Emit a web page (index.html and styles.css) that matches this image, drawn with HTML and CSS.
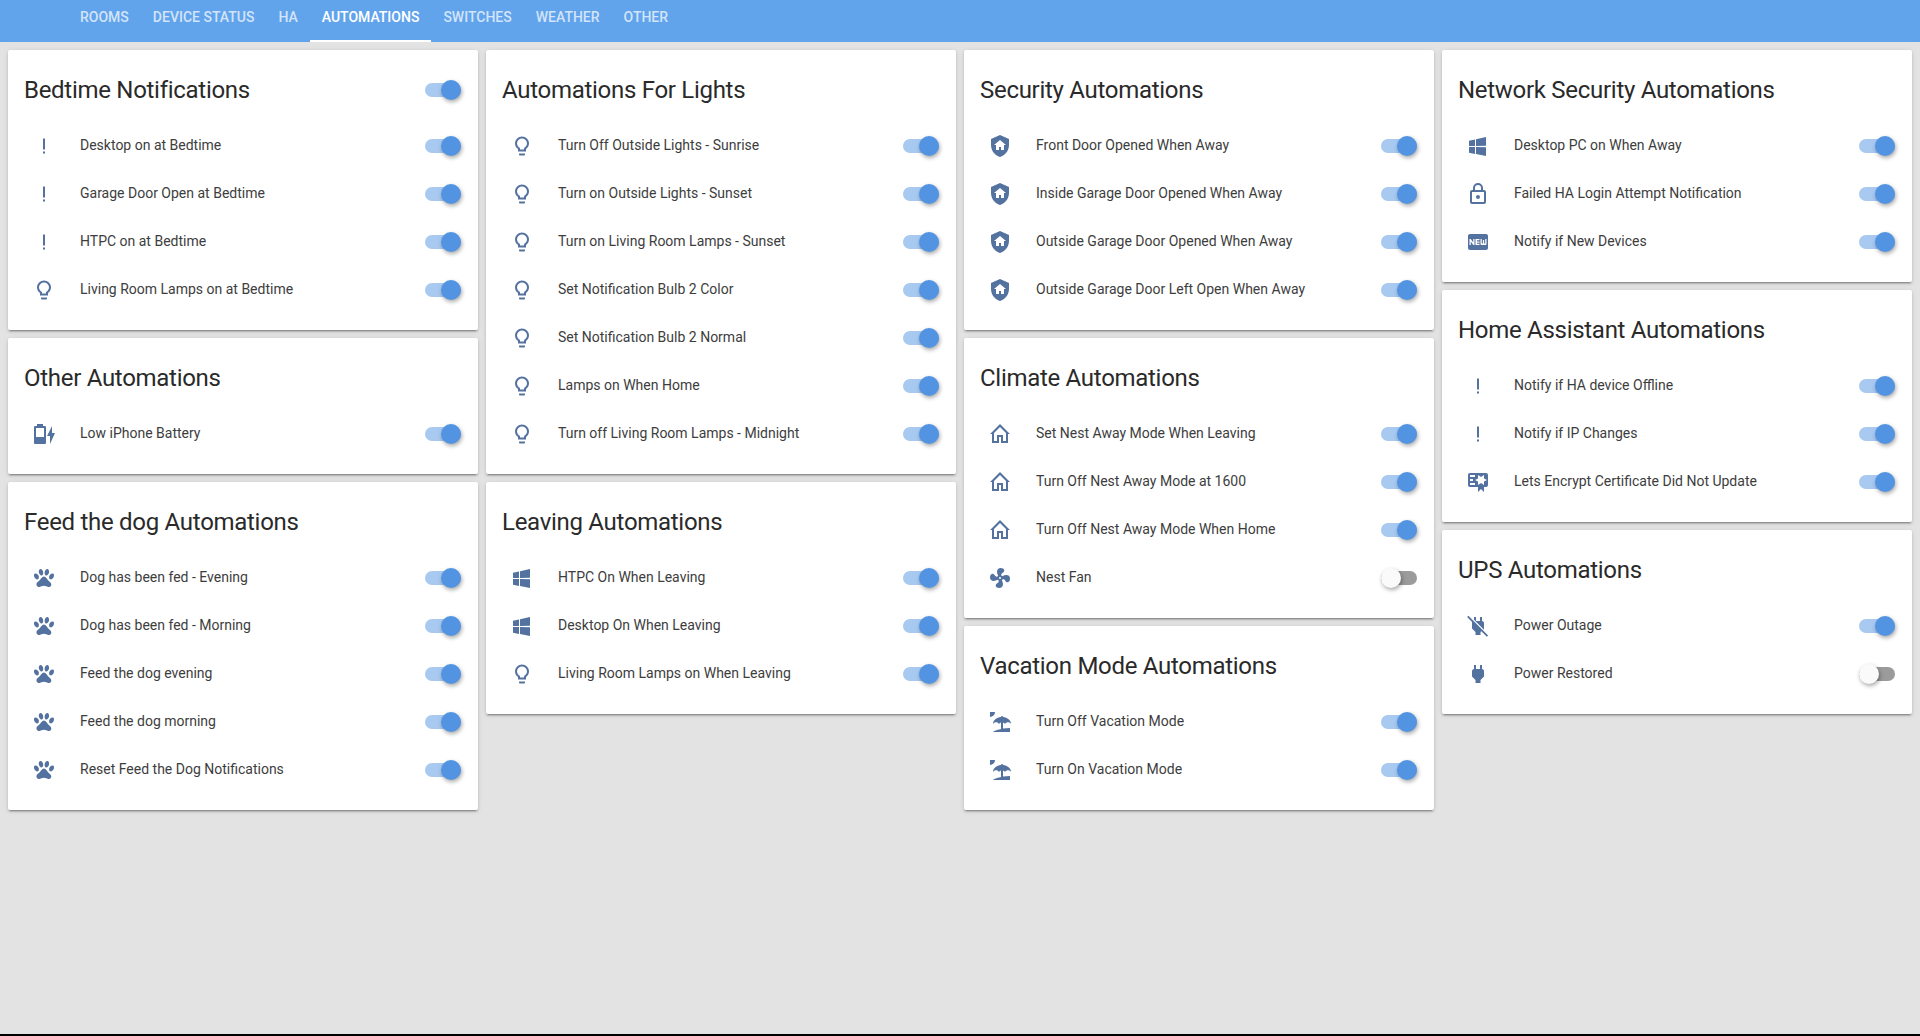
FILE: index.html
```html
<!DOCTYPE html>
<html lang="en">
<head>
    <meta charset="UTF-8">
    <title>Automations</title>
    <link rel="stylesheet" href="styles.css">
</head>
<body>
    <svg class="sprite" xmlns="http://www.w3.org/2000/svg">
        <symbol id="i-alert" viewBox="0 0 24 24"><path d="M11,4.5H13V15.5H11V4.5M13,17.5V19.5H11V17.5H13Z"/></symbol>
        <symbol id="i-bulb" viewBox="0 0 24 24"><path fill-rule="evenodd" d="M12,2.5A7,7 0 0,1 19,9.5C19,12 17.6,13.7 16,15V17.5H8V15C6.4,13.7 5,12 5,9.5A7,7 0 0,1 12,2.5ZM12,4.5A5,5 0 0,0 7,9.5C7,11.4 8.3,13 10,14V15.5H14V14C15.7,13 17,11.4 17,9.5A5,5 0 0,0 12,4.5ZM9,19.5H15V20.5A1,1 0 0,1 14,21.5H10A1,1 0 0,1 9,20.5Z"/></symbol>
        <symbol id="i-battery" viewBox="0 0 24 24"><path fill-rule="evenodd" d="M23,11H20V4L15,14H18V22ZM12.67,4H11V2H5V4H3.33A1.33,1.33 0 0,0 2,5.33V20.67C2,21.4 2.6,22 3.33,22H12.67C13.4,22 14,21.4 14,20.67V5.33A1.33,1.33 0 0,0 12.67,4ZM12,6V15H4V6Z"/></symbol>
        <symbol id="i-paw" viewBox="0 0 24 24"><path d="M8.35,3C9.53,2.83 10.78,4.12 11.14,5.9C11.5,7.67 10.85,9.25 9.67,9.43C8.5,9.61 7.24,8.32 6.87,6.54C6.5,4.77 7.17,3.19 8.35,3M15.5,3C16.69,3.19 17.35,4.77 17,6.54C16.62,8.32 15.37,9.61 14.19,9.43C13,9.25 12.35,7.67 12.72,5.9C13.08,4.12 14.33,2.83 15.5,3M3,7.6C4.14,7.11 5.69,8 6.5,9.55C7.26,11.13 7,12.79 5.87,13.28C4.74,13.77 3.2,12.89 2.41,11.32C1.62,9.75 1.9,8.08 3,7.6M21,7.6C22.1,8.08 22.38,9.75 21.59,11.32C20.8,12.89 19.26,13.77 18.13,13.28C17,12.79 16.74,11.13 17.5,9.55C18.31,8 19.86,7.11 21,7.6M19.33,18.38C19.37,19.32 18.65,20.36 17.79,20.75C16,21.57 13.88,19.87 11.89,19.87C9.9,19.87 7.76,21.64 6,20.75C5,20.26 4.31,18.96 4.44,17.88C4.62,16.39 6.41,15.59 7.47,14.5C8.88,13.09 9.88,10.44 11.89,10.44C13.89,10.44 14.95,13.05 16.3,14.5C17.41,15.72 19.26,16.75 19.33,18.38Z"/></symbol>
        <symbol id="i-shield" viewBox="0 0 24 24"><path fill-rule="evenodd" d="M11,13H13V16H16V11H18L12,6L6,11H8V16H11V13ZM12,1L3,5V11C3,16.55 6.84,21.74 12,23C17.16,21.74 21,16.55 21,11V5L12,1Z"/></symbol>
        <symbol id="i-home" viewBox="0 0 24 24"><path fill-rule="evenodd" d="M9,19V13H15V19H18V10.91L12,4.91L6,10.91V19H9ZM12,2.09L21.91,12H20V21H13V15H11V21H4V12H2.09L12,2.09Z"/></symbol>
        <symbol id="i-fan" viewBox="0 0 24 24"><path d="M12,11A1,1 0 0,0 11,12A1,1 0 0,0 12,13A1,1 0 0,0 13,12A1,1 0 0,0 12,11M12.5,2C17,2 17.11,5.57 14.75,6.75C13.76,7.24 13.32,8.29 13.13,9.22C13.61,9.42 14.03,9.73 14.35,10.13C18.05,8.13 22.03,8.92 22.03,12.5C22.03,17 18.46,17.1 17.28,14.73C16.78,13.74 15.72,13.3 14.79,13.11C14.59,13.59 14.28,14 13.88,14.34C15.87,18.03 15.08,22 11.5,22C7,22 6.91,18.42 9.27,17.24C10.25,16.75 10.69,15.71 10.89,14.79C10.4,14.59 9.97,14.27 9.65,13.87C5.96,15.85 2,15.07 2,11.5C2,7 5.56,6.89 6.74,9.26C7.24,10.25 8.29,10.68 9.22,10.87C9.41,10.39 9.73,9.97 10.14,9.65C8.15,5.96 8.94,2 12.5,2Z"/></symbol>
        <symbol id="i-beach" viewBox="0 0 24 24"><path d="M15,18.54C17.13,18.21 19.5,18 22,18V22H5C5,21.35 8.2,19.86 13,18.9V12.4C12.16,12.65 11.45,13.21 11,13.95C10.39,12.93 9.27,12.25 8,12.25C6.73,12.25 5.61,12.93 5,13.95C5.03,10.37 8.5,7.43 13,7.04V7A1,1 0 0,1 14,6A1,1 0 0,1 15,7V7.04C19.5,7.43 22.96,10.37 23,13.95C22.39,12.93 21.27,12.25 20,12.25C18.73,12.25 17.61,12.93 17,13.95C16.55,13.21 15.84,12.65 15,12.39V18.54M7,2A5,5 0 0,1 2,7V2H7Z"/></symbol>
        <symbol id="i-windows" viewBox="0 0 24 24"><path d="M3,12V6.75L9,5.43V11.91L3,12M20,3V11.75L10,11.9V5.21L20,3M3,13L9,13.09V19.9L3,18.75V13M20,13.25V22L10,20.09V13.1L20,13.25Z"/></symbol>
        <symbol id="i-lock" viewBox="0 0 24 24"><path fill-rule="evenodd" d="M12,17C10.89,17 10,16.1 10,15C10,13.89 10.89,13 12,13A2,2 0 0,1 14,15A2,2 0 0,1 12,17ZM18,20V10H6V20H18ZM18,8A2,2 0 0,1 20,10V20A2,2 0 0,1 18,22H6C4.89,22 4,21.1 4,20V10C4,8.89 4.89,8 6,8H7V6A5,5 0 0,1 12,1A5,5 0 0,1 17,6V8H18ZM12,3A3,3 0 0,0 9,6V8H15V6A3,3 0 0,0 12,3Z"/></symbol>
        <symbol id="i-new" viewBox="0 0 24 24"><path fill-rule="evenodd" d="M20,4C21.11,4 22,4.89 22,6V18C22,19.11 21.11,20 20,20H4C2.89,20 2,19.11 2,18V6C2,4.89 2.89,4 4,4H20ZM8.5,15V9H7.25V12.5L4.75,9H3.5V15H4.75V11.5L7.3,15H8.5ZM13.5,10.26V9H9.5V15H13.5V13.75H11V12.64H13.5V11.38H11V10.26H13.5ZM20.5,14V9H19.25V13.5H18.13V10H16.88V13.5H15.75V9H14.5V14A1,1 0 0,0 15.5,15H19.5A1,1 0 0,0 20.5,14Z"/></symbol>
        <symbol id="i-cert" viewBox="0 0 24 24"><path fill-rule="evenodd" d="M4,3C2.89,3 2,3.89 2,5V15A2,2 0 0,0 4,17H12V22L15,19L18,22V17H20A2,2 0 0,0 22,15V5A2,2 0 0,0 20,3H4ZM12,5L15,7L18,5V8.5L21,10L18,11.5V15L15,13L12,15V11.5L9,10L12,8.5V5ZM4,5H9V7H4V5ZM4,9H7V11H4V9ZM4,13H9V15H4V13Z"/></symbol>
        <symbol id="i-plug-off" viewBox="0 0 24 24"><path d="M22.11,21.46L2.39,1.73L1.11,3L6,7.89V14.5L9.5,18V21H14.5V18L15.31,17.2L20.84,22.73L22.11,21.46M16,7V3H14V7H10V3H8V5.8L18,15.8V9C18,8 17,7 16,7Z"/></symbol>
        <symbol id="i-plug" viewBox="0 0 24 24"><path d="M16,7V3H14V7H10V3H8V7C7,7 6,8 6,9V14.5L9.5,18V21H14.5V18L18,14.5V9C18,8 17,7 16,7Z"/></symbol>
    </svg>

    <header class="topbar">
        <nav class="tabs">
            <a class="tab" href="#">Rooms</a>
            <a class="tab" href="#">Device Status</a>
            <a class="tab" href="#">HA</a>
            <a class="tab active" href="#">Automations</a>
            <a class="tab" href="#">Switches</a>
            <a class="tab" href="#">Weather</a>
            <a class="tab" href="#">Other</a>
        </nav>
    </header>

    <main class="columns">
        <div class="column">
            <section class="card">
                <div class="card-header">
                    <h2>Bedtime Notifications</h2>
                    <span class="toggle on"></span>
                </div>
                <div class="row"><svg class="icon"><use href="#i-alert"/></svg><span class="name">Desktop on at Bedtime</span><span class="toggle on"></span></div>
                <div class="row"><svg class="icon"><use href="#i-alert"/></svg><span class="name">Garage Door Open at Bedtime</span><span class="toggle on"></span></div>
                <div class="row"><svg class="icon"><use href="#i-alert"/></svg><span class="name">HTPC on at Bedtime</span><span class="toggle on"></span></div>
                <div class="row"><svg class="icon"><use href="#i-bulb"/></svg><span class="name">Living Room Lamps on at Bedtime</span><span class="toggle on"></span></div>
            </section>
            <section class="card">
                <div class="card-header"><h2>Other Automations</h2></div>
                <div class="row"><svg class="icon"><use href="#i-battery"/></svg><span class="name">Low iPhone Battery</span><span class="toggle on"></span></div>
            </section>
            <section class="card">
                <div class="card-header"><h2>Feed the dog Automations</h2></div>
                <div class="row"><svg class="icon"><use href="#i-paw"/></svg><span class="name">Dog has been fed - Evening</span><span class="toggle on"></span></div>
                <div class="row"><svg class="icon"><use href="#i-paw"/></svg><span class="name">Dog has been fed - Morning</span><span class="toggle on"></span></div>
                <div class="row"><svg class="icon"><use href="#i-paw"/></svg><span class="name">Feed the dog evening</span><span class="toggle on"></span></div>
                <div class="row"><svg class="icon"><use href="#i-paw"/></svg><span class="name">Feed the dog morning</span><span class="toggle on"></span></div>
                <div class="row"><svg class="icon"><use href="#i-paw"/></svg><span class="name">Reset Feed the Dog Notifications</span><span class="toggle on"></span></div>
            </section>
        </div>

        <div class="column">
            <section class="card">
                <div class="card-header"><h2>Automations For Lights</h2></div>
                <div class="row"><svg class="icon"><use href="#i-bulb"/></svg><span class="name">Turn Off Outside Lights - Sunrise</span><span class="toggle on"></span></div>
                <div class="row"><svg class="icon"><use href="#i-bulb"/></svg><span class="name">Turn on Outside Lights - Sunset</span><span class="toggle on"></span></div>
                <div class="row"><svg class="icon"><use href="#i-bulb"/></svg><span class="name">Turn on Living Room Lamps - Sunset</span><span class="toggle on"></span></div>
                <div class="row"><svg class="icon"><use href="#i-bulb"/></svg><span class="name">Set Notification Bulb 2 Color</span><span class="toggle on"></span></div>
                <div class="row"><svg class="icon"><use href="#i-bulb"/></svg><span class="name">Set Notification Bulb 2 Normal</span><span class="toggle on"></span></div>
                <div class="row"><svg class="icon"><use href="#i-bulb"/></svg><span class="name">Lamps on When Home</span><span class="toggle on"></span></div>
                <div class="row"><svg class="icon"><use href="#i-bulb"/></svg><span class="name">Turn off Living Room Lamps - Midnight</span><span class="toggle on"></span></div>
            </section>
            <section class="card">
                <div class="card-header"><h2>Leaving Automations</h2></div>
                <div class="row"><svg class="icon"><use href="#i-windows"/></svg><span class="name">HTPC On When Leaving</span><span class="toggle on"></span></div>
                <div class="row"><svg class="icon"><use href="#i-windows"/></svg><span class="name">Desktop On When Leaving</span><span class="toggle on"></span></div>
                <div class="row"><svg class="icon"><use href="#i-bulb"/></svg><span class="name">Living Room Lamps on When Leaving</span><span class="toggle on"></span></div>
            </section>
        </div>

        <div class="column">
            <section class="card">
                <div class="card-header"><h2>Security Automations</h2></div>
                <div class="row"><svg class="icon"><use href="#i-shield"/></svg><span class="name">Front Door Opened When Away</span><span class="toggle on"></span></div>
                <div class="row"><svg class="icon"><use href="#i-shield"/></svg><span class="name">Inside Garage Door Opened When Away</span><span class="toggle on"></span></div>
                <div class="row"><svg class="icon"><use href="#i-shield"/></svg><span class="name">Outside Garage Door Opened When Away</span><span class="toggle on"></span></div>
                <div class="row"><svg class="icon"><use href="#i-shield"/></svg><span class="name">Outside Garage Door Left Open When Away</span><span class="toggle on"></span></div>
            </section>
            <section class="card">
                <div class="card-header"><h2>Climate Automations</h2></div>
                <div class="row"><svg class="icon"><use href="#i-home"/></svg><span class="name">Set Nest Away Mode When Leaving</span><span class="toggle on"></span></div>
                <div class="row"><svg class="icon"><use href="#i-home"/></svg><span class="name">Turn Off Nest Away Mode at 1600</span><span class="toggle on"></span></div>
                <div class="row"><svg class="icon"><use href="#i-home"/></svg><span class="name">Turn Off Nest Away Mode When Home</span><span class="toggle on"></span></div>
                <div class="row"><svg class="icon"><use href="#i-fan"/></svg><span class="name">Nest Fan</span><span class="toggle"></span></div>
            </section>
            <section class="card">
                <div class="card-header"><h2>Vacation Mode Automations</h2></div>
                <div class="row"><svg class="icon"><use href="#i-beach"/></svg><span class="name">Turn Off Vacation Mode</span><span class="toggle on"></span></div>
                <div class="row"><svg class="icon"><use href="#i-beach"/></svg><span class="name">Turn On Vacation Mode</span><span class="toggle on"></span></div>
            </section>
        </div>

        <div class="column">
            <section class="card">
                <div class="card-header"><h2>Network Security Automations</h2></div>
                <div class="row"><svg class="icon"><use href="#i-windows"/></svg><span class="name">Desktop PC on When Away</span><span class="toggle on"></span></div>
                <div class="row"><svg class="icon"><use href="#i-lock"/></svg><span class="name">Failed HA Login Attempt Notification</span><span class="toggle on"></span></div>
                <div class="row"><svg class="icon"><use href="#i-new"/></svg><span class="name">Notify if New Devices</span><span class="toggle on"></span></div>
            </section>
            <section class="card">
                <div class="card-header"><h2>Home Assistant Automations</h2></div>
                <div class="row"><svg class="icon"><use href="#i-alert"/></svg><span class="name">Notify if HA device Offline</span><span class="toggle on"></span></div>
                <div class="row"><svg class="icon"><use href="#i-alert"/></svg><span class="name">Notify if IP Changes</span><span class="toggle on"></span></div>
                <div class="row"><svg class="icon"><use href="#i-cert"/></svg><span class="name">Lets Encrypt Certificate Did Not Update</span><span class="toggle on"></span></div>
            </section>
            <section class="card">
                <div class="card-header"><h2>UPS Automations</h2></div>
                <div class="row"><svg class="icon"><use href="#i-plug-off"/></svg><span class="name">Power Outage</span><span class="toggle on"></span></div>
                <div class="row"><svg class="icon"><use href="#i-plug"/></svg><span class="name">Power Restored</span><span class="toggle"></span></div>
            </section>
        </div>
    </main>

    <div class="screen-edge"></div>
</body>
</html>
```

FILE: styles.css
```css
* {
    box-sizing: border-box;
}

body {
    margin: 0;
    height: 100vh;
    display: flex;
    flex-direction: column;
    overflow: hidden;
    background-color: #e3e3e3;
    font-family: Roboto, "Liberation Sans", sans-serif;
    color: #212121;
}

.sprite {
    display: none;
}

/* top tabs */
.topbar {
    background-color: #62a4ec;
    padding-left: 68px;
}

.tabs {
    display: flex;
}

.tab {
    padding: 7px 12px 13px;
    border-bottom: 2px solid transparent;
    font-size: 14px;
    font-weight: 500;
    line-height: 20px;
    text-transform: uppercase;
    text-decoration: none;
    color: rgba(255, 255, 255, 0.72);
}

.tab.active {
    color: white;
    border-bottom-color: white;
}

/* cards */
.columns {
    flex: 1;
    display: grid;
    grid-template-columns: repeat(4, 1fr);
    align-items: start;
    gap: 8px;
    padding: 8px;
}

.column {
    display: flex;
    flex-direction: column;
    gap: 8px;
}

.card {
    padding-bottom: 16px;
    background-color: white;
    border-radius: 2px;
    box-shadow: 0 2px 2px 0 rgba(0, 0, 0, 0.14), 0 1px 5px 0 rgba(0, 0, 0, 0.12), 0 3px 1px -2px rgba(0, 0, 0, 0.2);
}

.card-header {
    display: flex;
    justify-content: space-between;
    align-items: center;
    height: 72px;
    padding: 24px 16px 16px;
}

.card-header h2 {
    margin: 0;
    font-size: 24px;
    font-weight: 400;
    line-height: 32px;
    letter-spacing: -0.012em;
    color: #2a2a2a;
}

.row {
    display: flex;
    align-items: center;
    height: 48px;
    padding: 0 16px 0 24px;
}

.icon {
    flex: none;
    width: 24px;
    height: 24px;
    fill: #54729f;
}

.name {
    flex: 1;
    margin-left: 24px;
    padding-bottom: 2px;
    font-size: 14px;
    line-height: 20px;
    color: #3d3d3d;
}

/* toggles */
.toggle {
    flex: none;
    position: relative;
    width: 36px;
    height: 14px;
    margin-right: 1px;
    border-radius: 8px;
    background-color: #9b9b9b;
}

.toggle::after {
    content: "";
    position: absolute;
    top: -3px;
    left: 0;
    width: 20px;
    height: 20px;
    border-radius: 50%;
    background-color: #fafafa;
    box-shadow: 1px 2px 4px rgba(0, 0, 0, 0.35);
}

.toggle.on {
    background-color: #a8c9f0;
}

.toggle.on::after {
    left: 16px;
    background-color: #5294e2;
}

.screen-edge {
    height: 2px;
    background-color: black;
}
```
